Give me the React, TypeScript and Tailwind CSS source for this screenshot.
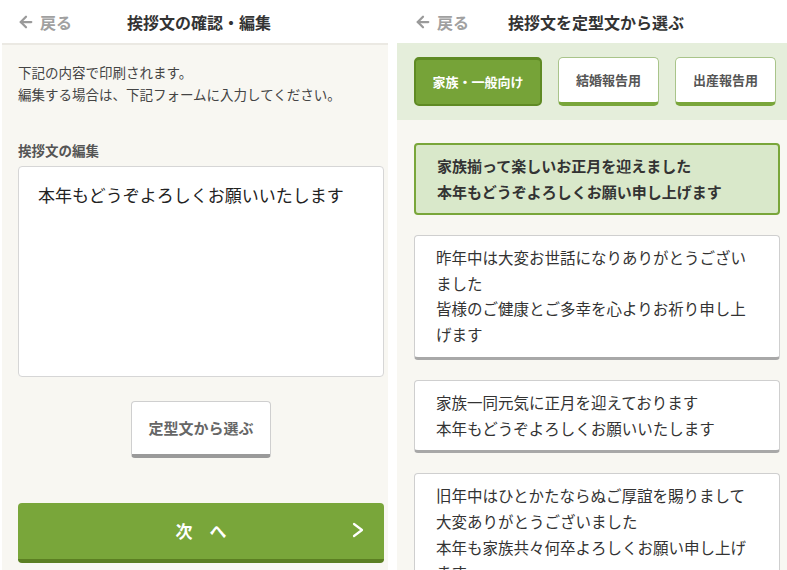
import { ArrowLeft } from 'lucide-react';

const font = "font-['Noto_Sans_CJK_JP',sans-serif]";

function Header({ title, gap }: { title: string; gap: string }) {
    return (
        <div className="flex h-[43px] shrink-0 items-center bg-white pl-[17px]">
            <ArrowLeft className="h-[18px] w-[18px] text-[#9a9a9a]" strokeWidth={3} />
            <span className="ml-[5px] text-[16px] font-bold text-[#a0a0a0]">戻る</span>
            <span className={`${gap} text-[16px] font-bold text-[#333]`}>{title}</span>
        </div>
    );
}

const templates = [
    ['家族揃って楽しいお正月を迎えました', '本年もどうぞよろしくお願い申し上げます'],
    ['昨年中は大変お世話になりありがとうございました', '皆様のご健康とご多幸を心よりお祈り申し上げます'],
    ['家族一同元気に正月を迎えております', '本年もどうぞよろしくお願いいたします'],
    ['旧年中はひとかたならぬご厚誼を賜りまして', '大変ありがとうございました', '本年も家族共々何卒よろしくお願い申し上げます'],
];

export default function App() {
    return (
        <div className={`${font} flex h-[570px] w-[787px] overflow-hidden bg-white`}>
            {/* Edit screen */}
            <div className="flex w-[388px] flex-col">
                <Header title="挨拶文の確認・編集" gap="ml-[55px]" />
                <div className="ml-[2px] min-h-0 flex-1 border-t-2 border-[#ebe9e3] bg-[#f8f7f2] pl-[16px] pr-[4px] pt-[16px]">
                    <p className="text-[13.5px] leading-[22px] text-[#444]">
                        下記の内容で印刷されます。<br />
                        編集する場合は、下記フォームに入力してください。
                    </p>
                    <p className="mt-[35px] text-[13.5px] font-bold leading-[20px] text-[#555]">挨拶文の編集</p>
                    <textarea
                        defaultValue="本年もどうぞよろしくお願いいたします"
                        className="mt-[6px] block h-[211px] w-full resize-none rounded-[4px] border border-[#d6d6d6] bg-white px-[19px] pt-[15px] text-[17px] leading-[26px] text-[#222] outline-none"
                    />
                    <button className="mx-auto mt-[24px] flex h-[57px] w-[140px] items-center justify-center rounded-[4px] border border-[#cfcfcf] border-b-[4px] border-b-[#9a9a9a] bg-white text-[15px] font-bold text-[#666]">
                        定型文から選ぶ
                    </button>
                    <button className="relative mt-[45px] flex h-[60px] w-full items-center justify-center rounded-[4px] border-b-[4px] border-[#5b7f22] bg-[#79a63a] text-[17px] font-bold text-white">
                        次　へ
                        <svg className="absolute right-[20px] top-[19px] h-[16px] w-[12px]" viewBox="0 0 12 16" fill="none" stroke="white" strokeWidth="2.2" strokeLinecap="round" strokeLinejoin="round">
                            <polyline points="2,2 10,8 2,14" />
                        </svg>
                    </button>
                </div>
            </div>

            {/* Template screen */}
            <div className="ml-[9px] flex w-[390px] flex-col">
                <Header title="挨拶文を定型文から選ぶ" gap="ml-[39px]" />
                <div className="flex h-[77px] shrink-0 gap-4 bg-[#e5eedb] pl-[17px] pt-[14px]">
                    <button className="flex h-[49px] w-[128px] items-center justify-center rounded-[5px] border-2 border-t-[3px] border-[#5f8a24] bg-[#76a338] text-[13px] font-bold text-white">
                        家族・一般向け
                    </button>
                    {['結婚報告用', '出産報告用'].map((t) => (
                        <button
                            key={t}
                            className="flex h-[49px] w-[101px] items-center justify-center rounded-[5px] border border-[#a9c48a] border-b-[4px] border-b-[#79a63a] bg-white text-[13px] font-bold text-[#555]"
                        >
                            {t}
                        </button>
                    ))}
                </div>
                <div className="flex min-h-0 flex-1 flex-col gap-[20px] overflow-hidden bg-[#f8f7f2] pl-[17px] pr-[7px] pt-[23px]">
                    {templates.map((lines, i) =>
                        i === 0 ? (
                            <div key={i} className="shrink-0 rounded-[4px] border-2 border-[#79a63a] bg-[#d9e8ca] px-[21px] py-[8px] text-[15px] font-bold leading-[26px] text-[#333]">
                                {lines.map((l) => (
                                    <p key={l}>{l}</p>
                                ))}
                            </div>
                        ) : (
                            <div key={i} className="shrink-0 rounded-[4px] border border-[#cfcfcf] border-b-[3px] border-b-[#a8a8a8] bg-white py-[9px] pl-[21px] pr-[22px] text-[15.5px] leading-[25.7px] text-[#333]">
                                {lines.map((l) => (
                                    <p key={l}>{l}</p>
                                ))}
                            </div>
                        )
                    )}
                </div>
            </div>
        </div>
    );
}
